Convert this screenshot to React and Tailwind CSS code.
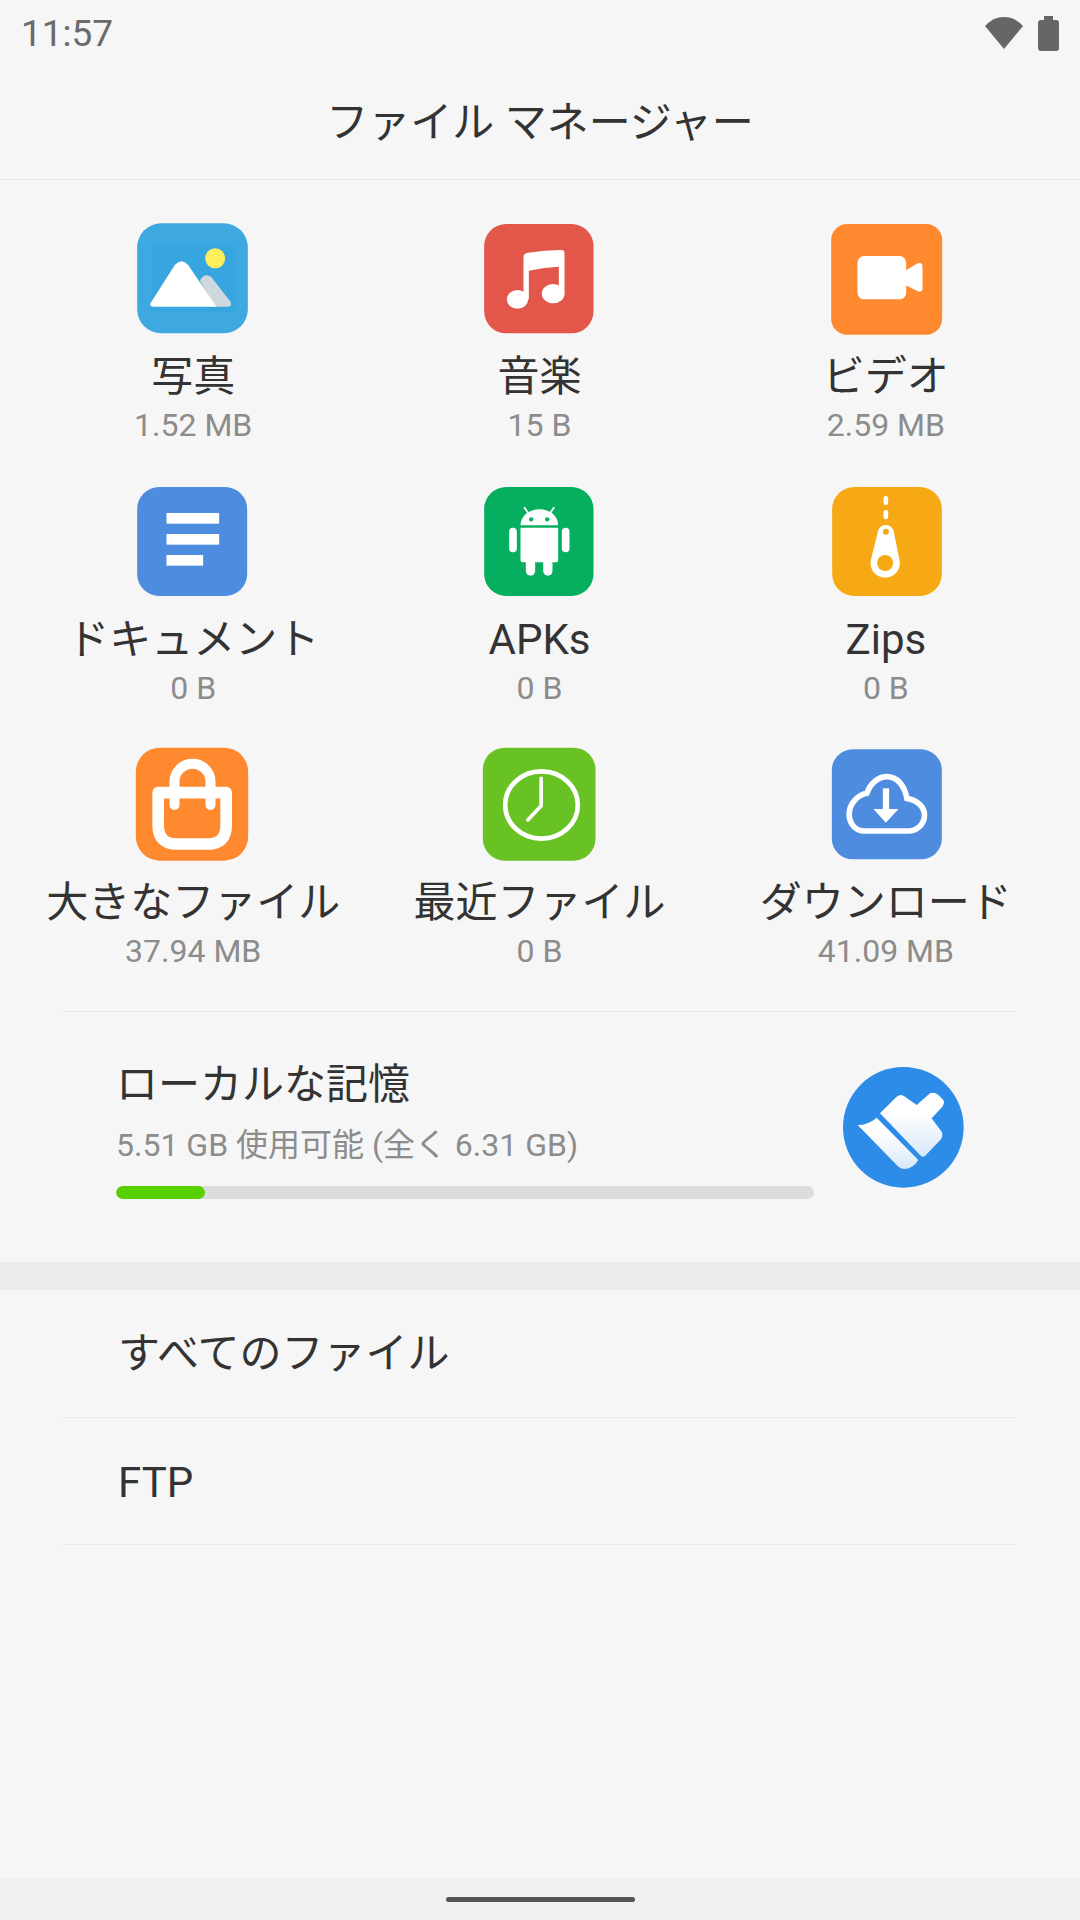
import React from 'react';

// Icons are drawn on a 420 unit square, the viewBox offset nudges them into their column
const IconBox = ({ box, children }) => (
  <svg width="140" height="140" viewBox={box} className="block shrink-0">
    {children}
  </svg>
);

const PhotoIcon = ({ box }) => (
  <IconBox box={box}>
    <rect x="52" y="40" width="332" height="330" rx="72" fill="#3ea8e0" />
    <rect x="95" y="105" width="250" height="200" fill="#37a5df" />
    <circle cx="286" cy="145" r="30" fill="#fcee5c" />
    <path d="M240 212 Q255 185 275 202 L332 275 Q338 290 322 290 L285 290 Z" fill="#cfd8dd" />
    <path d="M92 280 L165 165 Q185 143 205 165 L290 290 L100 290 Q88 290 92 280 Z" fill="#fff" />
  </IconBox>
);

const MusicIcon = ({ box }) => (
  <IconBox box={box}>
    <rect x="44" y="42" width="328" height="328" rx="66" fill="#e2574a" />
    <path d="M162 268 L162 142 Q162 130 175 128 Q225 120 275 120 Q285 120 285 130 L285 250 L268 250 L268 170 Q225 172 178 182 L178 268 Z" fill="#fff" />
    <ellipse cx="144" cy="268" rx="32" ry="28" fill="#fff" />
    <ellipse cx="251" cy="251" rx="34" ry="29" fill="#fff" />
  </IconBox>
);

const VideoIcon = ({ box }) => (
  <IconBox box={box}>
    <rect x="48" y="42" width="333" height="332" rx="48" fill="#fe892f" />
    <rect x="127" y="138" width="146" height="130" rx="20" fill="#fff" />
    <path d="M270 182 L308 160 Q322 156 322 170 L322 235 Q322 248 308 244 L270 225 Z" fill="#fff" />
  </IconBox>
);

const DocIcon = ({ box }) => (
  <IconBox box={box}>
    <rect x="52" y="36" width="330" height="327" rx="66" fill="#4e8ce0" />
    <rect x="140" y="114" width="158" height="32" fill="#fff" />
    <rect x="140" y="177" width="158" height="32" fill="#fff" />
    <rect x="140" y="240" width="110" height="32" fill="#fff" />
  </IconBox>
);

const ApkIcon = ({ box }) => (
  <IconBox box={box}>
    <rect x="44" y="36" width="328" height="327" rx="66" fill="#06ae5f" />
    <path d="M153 151 C153 122 180 103 210 103 C240 103 266 122 266 151 Z" fill="#fff" />
    <circle cx="185" cy="133" r="6.5" fill="#06ae5f" />
    <circle cx="233" cy="133" r="6.5" fill="#06ae5f" />
    <path d="M165 98 L180 120 M253 98 L238 120" stroke="#fff" strokeWidth="5" strokeLinecap="round" />
    <path d="M153 158 H266 V254 Q266 262 258 262 H161 Q153 262 153 254 Z" fill="#fff" />
    <rect x="119" y="158" width="23" height="74" rx="11.5" fill="#fff" />
    <rect x="277" y="158" width="23" height="74" rx="11.5" fill="#fff" />
    <rect x="169" y="250" width="28" height="52" rx="14" fill="#fff" />
    <rect x="221" y="250" width="28" height="52" rx="14" fill="#fff" />
  </IconBox>
);

const ZipIcon = ({ box }) => (
  <IconBox box={box}>
    <rect x="51" y="36" width="329" height="327" rx="66" fill="#f6a914" />
    <rect x="205" y="63" width="14" height="27" rx="7" fill="#fff" />
    <rect x="205" y="105" width="14" height="28" rx="7" fill="#fff" />
    <path d="M187 175 A25 25 0 0 1 237 175 L253 255 A44 44 0 1 1 167 255 Z" fill="#fff" />
    <circle cx="212" cy="170" r="9" fill="#f6a914" />
    <circle cx="210" cy="264" r="24" fill="#f6a914" />
  </IconBox>
);

const BagIcon = ({ box }) => (
  <IconBox box={box}>
    <rect x="48" y="38" width="337" height="339" rx="72" fill="#fe892f" />
    <path d="M115 173 H319 V270 Q319 327 265 327 H170 Q115 327 115 270 Z" fill="none" stroke="#fff" strokeWidth="35" strokeLinejoin="round" />
    <path d="M164 210 V140 A54 54 0 0 1 272 140 V210" fill="none" stroke="#fff" strokeWidth="30" strokeLinecap="round" />
  </IconBox>
);

const ClockIcon = ({ box }) => (
  <IconBox box={box}>
    <rect x="40" y="38" width="338" height="339" rx="66" fill="#69c224" />
    <ellipse cx="216" cy="210" rx="109" ry="101" fill="none" stroke="#fff" strokeWidth="14" />
    <path d="M215 130 V212 L175 255" fill="none" stroke="#fff" strokeWidth="11" strokeLinecap="round" strokeLinejoin="round" />
  </IconBox>
);

const DownloadIcon = ({ box }) => (
  <IconBox box={box}>
    <rect x="50" y="43" width="330" height="330" rx="62" fill="#4e8ce0" />
    <path d="M148 288 C118 288 102 262 102 238 C102 205 128 180 155 175 C165 145 190 125 215 125 C245 125 268 150 275 190 C305 195 328 215 328 240 C328 268 305 288 280 288 Z" fill="none" stroke="#fff" strokeWidth="17" />
    <rect x="203" y="160" width="19" height="65" fill="#fff" />
    <path d="M175 222 H250 L212 263 Z" fill="#fff" />
  </IconBox>
);

const CleanIcon = () => (
  <svg width="150" height="150" viewBox="0 0 450 450" className="block shrink-0">
    <defs>
      <linearGradient id="brushFill" x1="0" y1="0" x2="0" y2="1">
        <stop offset="0.3" stopColor="#ffffff" />
        <stop offset="1" stopColor="#d8e8f8" />
      </linearGradient>
    </defs>
    <circle cx="235" cy="232" r="181" fill="#2c8ce8" />
    <path d="M165 190 L215 140 Q228 130 240 140 L275 165 L315 130 Q328 125 340 135 L355 150 Q360 158 352 170 L320 205 L350 245 Q355 258 348 268 L300 318 Q292 323 285 315 Z" fill="url(#brushFill)" />
    <path d="M98 225 Q130 225 155 203 L280 330 Q265 355 240 357 Q225 357 215 345 Z" fill="url(#brushFill)" />
  </svg>
);

const tiles = [
  { label: '写真', size: '1.52 MB', Icon: PhotoIcon, box: '9.5 0 420 420' },
  { label: '音楽', size: '15 B', Icon: MusicIcon, box: '-1.5 0 420 420' },
  { label: 'ビデオ', size: '2.59 MB', Icon: VideoIcon, box: '2.5 0 420 420' },
  { label: 'ドキュメント', size: '0 B', Icon: DocIcon, box: '9.5 -6 420 420' },
  { label: 'APKs', size: '0 B', Icon: ApkIcon, box: '-1.5 -6 420 420' },
  { label: 'Zips', size: '0 B', Icon: ZipIcon, box: '2.5 -6 420 420' },
  { label: '大きなファイル', size: '37.94 MB', Icon: BagIcon, box: '9.5 3 420 420' },
  { label: '最近ファイル', size: '0 B', Icon: ClockIcon, box: '-1.5 3 420 420' },
  { label: 'ダウンロード', size: '41.09 MB', Icon: DownloadIcon, box: '2.5 3 420 420' },
];

const Tile = ({ label, size, Icon, box }) => (
  <div className="flex h-[240px] flex-col items-center">
    <Icon box={box} />
    <div className="h-[50px] pt-[2px] text-[42px] leading-[50px] whitespace-nowrap text-[#333333]">{label}</div>
    <div className="h-[50px] text-[32px] leading-[50px] whitespace-nowrap text-[#8c8c8c]">{size}</div>
  </div>
);

const App = () => {
  return (
    <div
      className="flex h-[1920px] w-[1080px] flex-col overflow-hidden bg-[#f6f6f6]"
      style={{ fontFamily: 'Roboto, "Noto Sans CJK JP", sans-serif' }}
    >
      {/* Status bar */}
      <div className="flex h-[66px] items-center justify-between pr-[21px] pl-[21px]">
        <span className="pt-[2px] text-[37px] text-[#6a6a6a]">11:57</span>
        <div className="flex items-center gap-[15px]">
          <svg width="38" height="34" viewBox="0 0 38 34">
            <path d="M0 10 Q8 1 19 1 Q30 1 38 10 L19 33 Z" fill="#666666" />
          </svg>
          <svg width="21" height="35" viewBox="0 0 21 35">
            <path d="M6 0 H15 V4 H18 Q21 4 21 7 V32 Q21 35 18 35 H3 Q0 35 0 32 V7 Q0 4 3 4 H6 Z" fill="#666666" />
          </svg>
        </div>
      </div>

      {/* Title */}
      <div className="flex h-[114px] items-center justify-center border-b border-[#e8e8e8] text-[42px] text-[#333333]">
        ファイル マネージャー
      </div>

      {/* Category grid */}
      <div className="grid grid-cols-3 gap-y-[23px] pt-[30px] pr-[21px] pl-5">
        {tiles.map((tile) => (
          <Tile key={tile.label} {...tile} />
        ))}
      </div>

      {/* Local storage */}
      <div className="mx-[63px] mt-[35px] flex h-[251px] w-[952px] items-start gap-[11px] border-t border-[#e8e8e8] pt-[38px] pl-[53px]">
        <div className="w-[698px]">
          <div className="h-[64px] pt-[3px] text-[42px] leading-[64px] text-[#333333]">ローカルな記憶</div>
          <div className="h-[62px] text-[32px] leading-[62px] text-[#8c8c8c]">5.51 GB 使用可能 (全く 6.31 GB)</div>
          <div className="mt-[10px] h-[13px] overflow-hidden rounded-full bg-[#dcdcdc]">
            <div className="h-full w-[89px] rounded-full bg-[#58d000]" />
          </div>
        </div>
        <CleanIcon />
      </div>

      <div className="h-[28px] bg-[#ebebed]" />

      {/* File lists */}
      <div className="mr-[64px] ml-[63px] flex h-[128px] items-center border-b border-[#e8e8e8] pl-[55px] text-[42px] text-[#333333]">
        すべてのファイル
      </div>
      <div className="mr-[64px] ml-[63px] flex h-[127px] items-center border-b border-[#e8e8e8] pt-[2px] pl-[55px] text-[42px] text-[#333333]">
        FTP
      </div>

      {/* Navigation bar */}
      <div className="mt-auto flex h-[42px] items-center justify-center bg-[#eff1f0]">
        <div className="h-[5px] w-[189px] rounded-full bg-[#555555]" />
      </div>
    </div>
  );
};

export default App;
